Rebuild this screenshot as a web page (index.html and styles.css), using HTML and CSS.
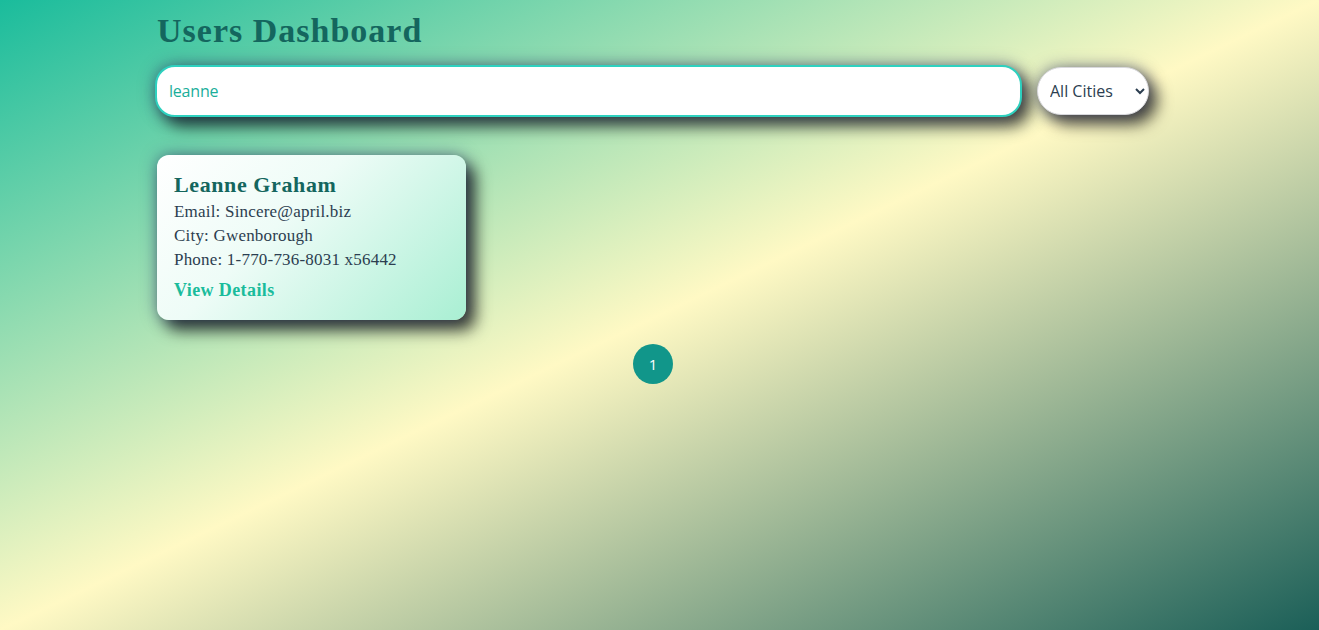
FILE: index.html
```html
<!DOCTYPE html>
<html lang="en">
<head>
<meta charset="utf-8">
<title>Users Dashboard</title>
<link rel="stylesheet" href="styles.css">
</head>
<body>
<div class="container">
  <h1 class="title">Users Dashboard</h1>
  <div class="filters">
    <input class="search" type="text" value="leanne" placeholder="Search by name...">
    <select class="city-select">
      <option>All Cities</option>
    </select>
  </div>
  <div class="grid">
    <div class="card">
      <h3 class="card-name">Leanne Graham</h3>
      <p class="card-line">Email: Sincere@april.biz</p>
      <p class="card-line">City: Gwenborough</p>
      <p class="card-line">Phone: 1-770-736-8031 x56442</p>
      <a class="card-link" href="#">View Details</a>
    </div>
  </div>
  <div class="pagination">
    <button class="page-btn active">1</button>
  </div>
</div>
</body>
</html>
```

FILE: styles.css
```css
html, body {
  margin: 0;
  padding: 0;
  height: 100%;
}
body {
  background: linear-gradient(to bottom right, #1abc9c 0%, #fff9c4 50%, #1b5f58 100%);
  font-family: "Liberation Serif", Georgia, serif;
  color: #2c3e50;
}
.container {
  width: 994px;
  margin-left: 155px;
  padding-top: 1px;
}
.title {
  margin: 10px 0 14px 2px;
  font-size: 34px;
  letter-spacing: 1px;
  font-weight: bold;
  color: #14665e;
  line-height: 40px;
}
.filters {
  display: flex;
  align-items: center;
  gap: 15px;
}
.search {
  flex: 1;
  height: 52px;
  box-sizing: border-box;
  padding: 0 12px;
  border: 2px solid #2ed1bf;
  border-radius: 20px;
  background: #fff;
  font-family: "Open Sans", "Noto Sans", sans-serif;
  font-size: 16px;
  letter-spacing: -0.2px;
  color: #1aae9a;
  outline: none;
  box-shadow: 0 0 16px rgba(40, 50, 110, 0.55), 8px 9px 16px rgba(0, 0, 0, 0.7);
}
.city-select {
  width: 112px;
  height: 48px;
  box-sizing: border-box;
  padding: 0 6px 0 8px;
  border: 1px solid #d8d8dc;
  border-radius: 24px;
  background: #fff;
  font-family: "Open Sans", "Noto Sans", sans-serif;
  font-size: 16px;
  color: #2c3e50;
  box-shadow: 0 0 16px rgba(40, 50, 110, 0.55), 8px 9px 16px rgba(0, 0, 0, 0.7);
}
.grid {
  display: flex;
  margin-top: 38px;
  padding-left: 2px;
}
.card {
  width: 309px;
  box-sizing: border-box;
  padding: 17px 17px 19px;
  border-radius: 12px;
  background: linear-gradient(135deg, #ffffff 0%, #eefcf7 40%, #a9efd3 100%);
  box-shadow: 0 0 16px rgba(40, 50, 110, 0.55), 9px 10px 16px rgba(0, 0, 0, 0.75);
}
.card-name {
  margin: 0 0 2px;
  font-size: 22px;
  letter-spacing: 0.6px;
  line-height: 26px;
  color: #14665e;
}
.card-line {
  margin: 0;
  font-size: 17px;
  letter-spacing: 0.2px;
  line-height: 24px;
  color: #2c3e50;
}
.card-link {
  display: inline-block;
  margin-top: 8px;
  font-size: 18px;
  letter-spacing: 0.4px;
  font-weight: bold;
  color: #1abc9c;
  text-decoration: none;
}
.pagination {
  display: flex;
  justify-content: center;
  margin-top: 24px;
  padding-left: 2px;
}
.page-btn {
  width: 40px;
  height: 40px;
  border: none;
  border-radius: 50%;
  background: #11968a;
  color: #fff;
  font-family: "Open Sans", "Noto Sans", sans-serif;
  font-size: 15px;
  padding: 0;
}
```
